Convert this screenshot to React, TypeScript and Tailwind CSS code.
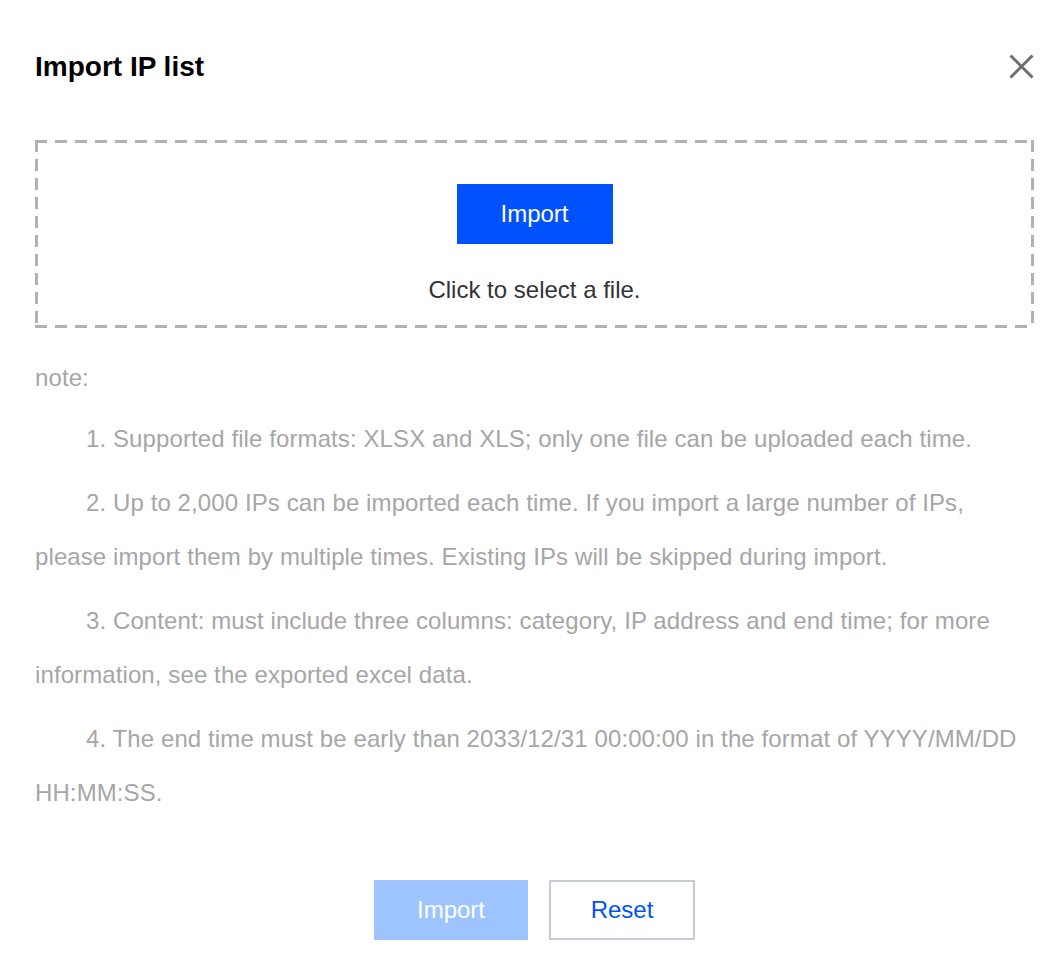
import React from "react";

export default function App() {
  const font = { fontFamily: '"Liberation Sans", Arial, sans-serif' };
  return (
    <div className="w-[1062px] h-[974px] bg-white relative" style={font}>
      <div className="pl-[35px] pr-[28px] pt-[50px]">
        <div className="flex items-center justify-between h-[34px]">
          <h1 className="text-[28px] font-bold text-black leading-none">Import IP list</h1>
          <svg width="25" height="25" viewBox="0 0 25 25" className="-mt-[2px]">
            <path d="M1.5 1.5 L23.5 23.5 M23.5 1.5 L1.5 23.5" stroke="#6e6e6e" strokeWidth="3" />
          </svg>
        </div>
        <div className="mt-[56px] h-[188px] flex flex-col items-center pt-[44px] bg-no-repeat [background-image:repeating-linear-gradient(90deg,#b1b1b1_0_12px,transparent_12px_20px),repeating-linear-gradient(90deg,#b1b1b1_0_12px,transparent_12px_20px),repeating-linear-gradient(180deg,#b1b1b1_0_12px,transparent_12px_19px),repeating-linear-gradient(180deg,#b1b1b1_0_12px,transparent_12px_19px)] [background-size:100%_3px,100%_3px,3px_100%,3px_100%] [background-position:0_0,0_100%,0_0,100%_0]">
          <button className="w-[156px] h-[60px] bg-[#0052ff] text-white text-[24px]">Import</button>
          <div className="mt-[32px] text-[24px] leading-[28px] text-[#333333]">Click to select a file.</div>
        </div>
        <div className="mt-[23px] text-[24px] text-[#a6a6a6] leading-[54px] tracking-[0.1px]">
          <p>note:</p>
          <p className="mt-[7px] indent-[51px]">1. Supported file formats: XLSX and XLS; only one file can be uploaded each time.</p>
          <p className="mt-[10px] indent-[51px]">2. Up to 2,000 IPs can be imported each time. If you import a large number of IPs, please import them by multiple times. Existing IPs will be skipped during import.</p>
          <p className="mt-[10px] indent-[51px]">3. Content: must include three columns: category, IP address and end time; for more information, see the exported excel data.</p>
          <p className="mt-[10px] indent-[51px]">4. The end time must be early than 2033/12/31 00:00:00 in the format of YYYY/MM/DD HH:MM:SS.</p>
        </div>
        <div className="mt-[60px] flex justify-center gap-[21px]">
          <button className="w-[154px] h-[60px] bg-[#9ec4ff] text-white text-[24px]">Import</button>
          <button className="w-[146px] h-[60px] bg-white border-2 border-[#c6cbd6] text-[#0052ff] text-[24px]">Reset</button>
        </div>
      </div>
    </div>
  );
}
